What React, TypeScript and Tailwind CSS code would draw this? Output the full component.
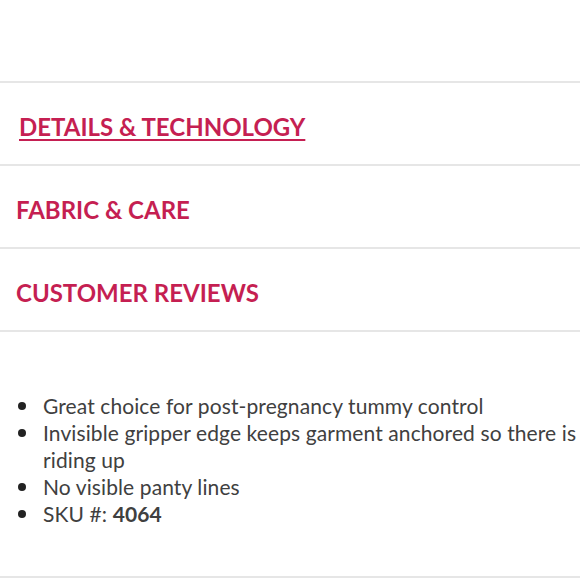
import React from "react";

const sections = [
  { title: "DETAILS & TECHNOLOGY", active: true },
  { title: "FABRIC & CARE", active: false },
  { title: "CUSTOMER REVIEWS", active: false },
];

const items = [
  "Great choice for post-pregnancy tummy control",
  "Invisible gripper edge keeps garment anchored so there is",
  "No visible panty lines",
];

const Bullet = () => (
  <span className="w-[43px] pl-[18px] shrink-0 flex h-[27px] items-center">
    <span className="w-[8px] h-[8px] rounded-full bg-[#222]" />
  </span>
);

const App = () => {
  return (
    <div className="w-[580px] h-[580px] overflow-hidden bg-white font-['Lato','Open_Sans',sans-serif]">
      <div className="h-[83px] border-b-2 border-[#e6e6e6]" />

      {sections.map((section) => (
        <div
          key={section.title}
          className="h-[83px] pt-[6px] flex items-center border-b-2 border-[#e6e6e6]"
        >
          <span
            className={`text-[24px] font-bold text-[#c51f52] ${
              section.active ? "pl-[19px] underline underline-offset-[3px] decoration-2" : "pl-[16px]"
            }`}
          >
            {section.title}
          </span>
        </div>
      ))}

      <ul className="h-[246px] pt-[60px] text-[21px] leading-[27px] text-[#404040] tracking-[0.1px] border-b-2 border-[#e6e6e6]">
        <li className="flex">
          <Bullet />
          <span>{items[0]}</span>
        </li>
        <li className="flex">
          <Bullet />
          <span className="whitespace-nowrap">
            {items[1]}
            <br />
            riding up
          </span>
        </li>
        <li className="flex">
          <Bullet />
          <span>{items[2]}</span>
        </li>
        <li className="flex">
          <Bullet />
          <span>
            SKU #: <span className="font-bold">4064</span>
          </span>
        </li>
      </ul>
    </div>
  );
};

export default App;
